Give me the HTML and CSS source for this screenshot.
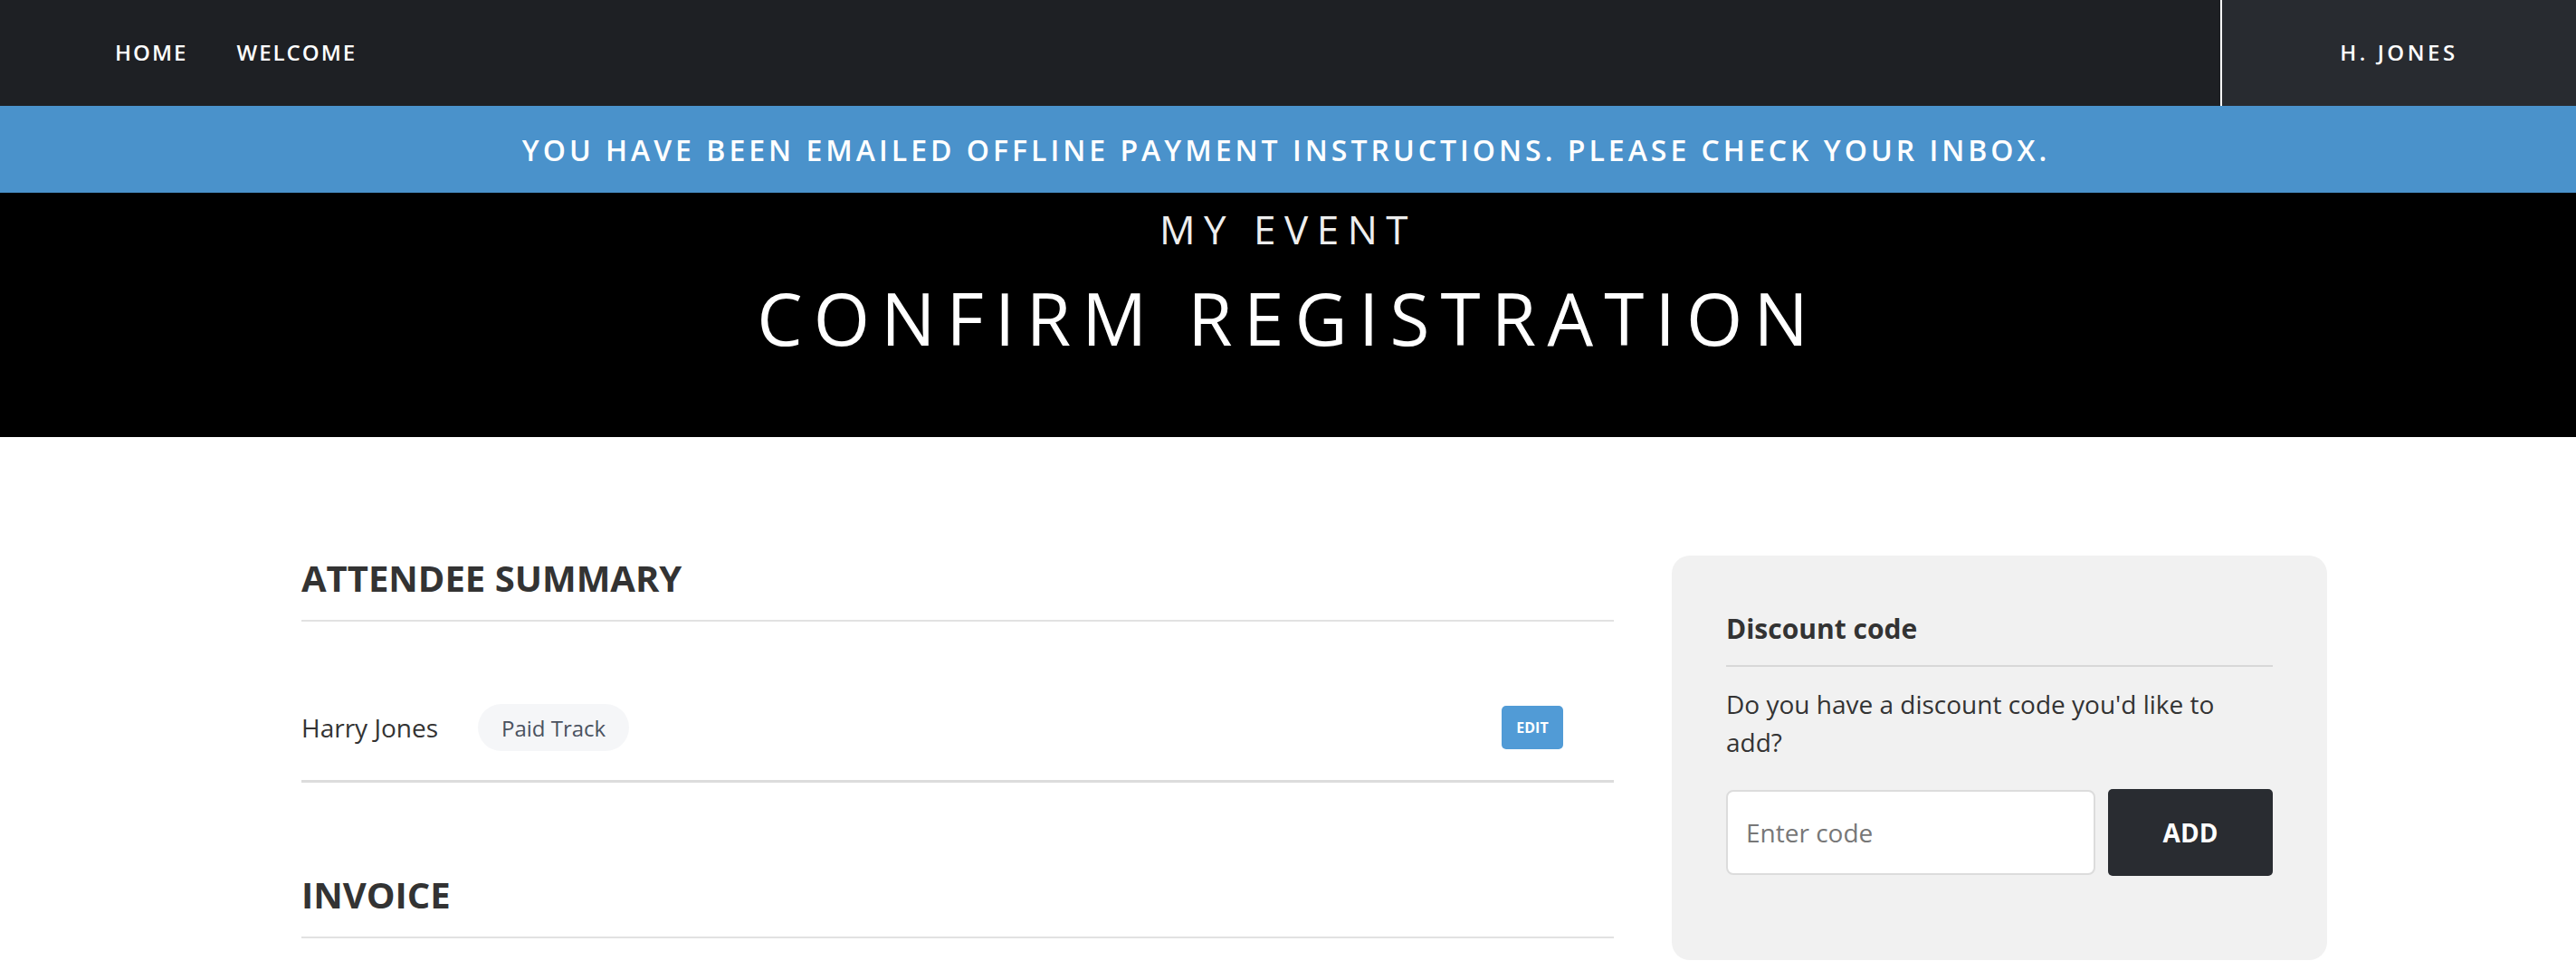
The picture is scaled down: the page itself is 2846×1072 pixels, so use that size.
FILE: index.html
```html
<!DOCTYPE html>
<html lang="en">
<head>
<meta charset="utf-8">
<title>Confirm Registration</title>
<link rel="stylesheet" href="styles.css">
</head>
<body>
<header class="topnav">
  <nav class="nav-links">
    <a class="nav-link" href="#">HOME</a>
    <a class="nav-link" href="#">WELCOME</a>
  </nav>
  <div class="nav-user">H. JONES</div>
</header>
<div class="alert-banner">YOU HAVE BEEN EMAILED OFFLINE PAYMENT INSTRUCTIONS. PLEASE CHECK YOUR INBOX.</div>
<section class="hero">
  <div class="hero-event">MY EVENT</div>
  <h1 class="hero-title">CONFIRM REGISTRATION</h1>
</section>
<main class="content">
  <div class="main-col">
    <h2 class="section-title">ATTENDEE SUMMARY</h2>
    <div class="attendee-row">
      <span class="attendee-name">Harry Jones</span>
      <span class="pill">Paid Track</span>
      <span class="spacer"></span>
      <button class="edit-btn">EDIT</button>
    </div>
    <h2 class="section-title invoice-title">INVOICE</h2>
  </div>
  <aside class="discount-card">
    <h3 class="card-title">Discount code</h3>
    <p class="card-text">Do you have a discount code you'd like to add?</p>
    <div class="code-form">
      <input class="code-input" type="text" placeholder="Enter code">
      <button class="add-btn">ADD</button>
    </div>
  </aside>
</main>
</body>
</html>
```

FILE: styles.css
```css
* { box-sizing: border-box; }
html, body { margin: 0; padding: 0; }
body {
  font-family: "Open Sans", "Noto Sans", sans-serif;
  color: #333;
  background: #fff;
}
.topnav {
  display: flex;
  align-items: stretch;
  height: 117px;
  background: #1e2024;
}
.nav-links {
  flex: 1;
  display: flex;
  align-items: center;
  gap: 54px;
  padding-left: 127px;
  padding-bottom: 2px;
}
.nav-link {
  color: #fff;
  text-decoration: none;
  font-size: 24px;
  font-weight: 600;
  letter-spacing: 2px;
}
.nav-user {
  width: 393px;
  display: flex;
  align-items: center;
  justify-content: center;
  background: #282b30;
  border-left: 2px solid #fff;
  color: #fff;
  font-size: 24px;
  font-weight: 600;
  letter-spacing: 3.5px;
  padding-bottom: 2px;
}
.alert-banner {
  height: 96px;
  display: flex;
  align-items: center;
  justify-content: center;
  background: #4a92cb;
  color: #fff;
  font-size: 32px;
  font-weight: 600;
  letter-spacing: 4px;
  padding-right: 4px;
}
.hero {
  height: 270px;
  background: #000;
  color: #fff;
  text-align: center;
  padding-top: 10px;
}
.hero-event {
  font-size: 44px;
  letter-spacing: 9.5px;
  line-height: 60px;
  color: #eee;
}
.hero-title {
  margin: 18px 0 0;
  font-size: 80px;
  font-weight: 400;
  letter-spacing: 12.2px;
  line-height: 100px;
}
.content {
  display: flex;
  align-items: flex-start;
  gap: 64px;
  padding: 132px 0 40px 333px;
}
.main-col {
  width: 1450px;
}
.section-title {
  margin: 0;
  font-size: 40px;
  font-weight: 700;
  line-height: 48px;
  padding-bottom: 22px;
  border-bottom: 2px solid #e2e2e2;
}
.attendee-row {
  display: flex;
  align-items: center;
  margin-top: 59px;
  padding: 32px 56px 32px 0;
  border-bottom: 3px solid #dcdcdc;
}
.attendee-name {
  font-size: 28px;
}
.pill {
  margin-left: 44px;
  height: 52px;
  display: inline-flex;
  align-items: center;
  padding: 0 26px;
  border-radius: 26px;
  background: #f5f6f8;
  color: #4a5260;
  font-size: 24px;
  font-weight: 500;
}
.spacer { flex: 1; }
.edit-btn {
  width: 68px;
  height: 48px;
  border: none;
  border-radius: 5px;
  background: #519bd6;
  color: #fff;
  font-family: inherit;
  font-size: 16px;
  font-weight: 700;
  padding: 0;
}
.invoice-title {
  margin-top: 100px;
}
.discount-card {
  width: 724px;
  margin-top: -1px;
  background: #f1f1f1;
  border-radius: 20px;
  padding: 60px 60px 93px;
}
.card-title {
  margin: 0;
  font-size: 30px;
  font-weight: 700;
  line-height: 42px;
  padding-bottom: 19px;
  border-bottom: 2px solid #d8d8d8;
}
.card-text {
  margin: 20px 0 0;
  font-size: 28px;
  line-height: 42px;
}
.code-form {
  display: flex;
  gap: 14px;
  margin-top: 32px;
}
.code-input {
  width: 408px;
  height: 94px;
  border: 2px solid #dcdcdc;
  border-radius: 8px;
  background: #fff;
  padding: 0 20px;
  font-family: inherit;
  font-size: 28px;
  color: #333;
}
.code-input::placeholder { color: #777; }
.add-btn {
  flex: 1;
  height: 96px;
  margin-top: -1px;
  border: none;
  border-radius: 5px;
  background: #292c31;
  color: #fff;
  font-family: inherit;
  font-size: 28px;
  font-weight: 700;
}
```
